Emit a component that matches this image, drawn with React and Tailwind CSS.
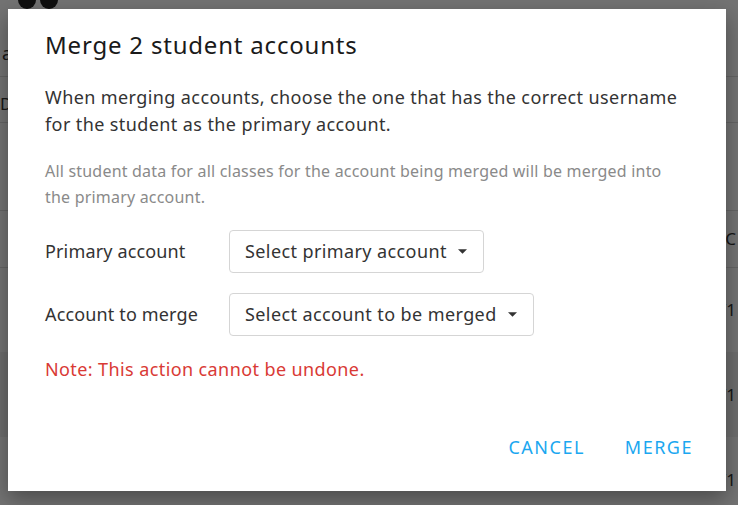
import React from 'react';

const font = { fontFamily: '"Noto Sans", "Open Sans", sans-serif' };

function SelectBox({ label }) {
  return (
    <button className="flex h-[43px] items-center gap-[11px] rounded-[4px] border border-[#d5d5d5] bg-white pl-[15px] pr-[16px] text-[18px] tracking-[0.4px] text-[#333]">
      <span>{label}</span>
      <svg width="9" height="5" viewBox="0 0 10 5">
        <path d="M0 0h10L5 5z" fill="#333" />
      </svg>
    </button>
  );
}

function BackgroundPage() {
  return (
    <div className="flex h-[505px] w-[738px] flex-col overflow-hidden bg-white text-[#333]">
      <div className="flex h-[40px] shrink-0 items-start gap-[4px] pl-[18px]">
        <div className="h-[9px] w-[18px] rounded-b-full bg-[#222]" />
        <div className="h-[9px] w-[18px] rounded-b-full bg-[#222]" />
      </div>
      <div className="flex h-[36px] shrink-0 items-start pl-[2px] text-[18px]">ac</div>
      <div className="flex h-[47px] shrink-0 items-center border-y border-[#ddd] pt-[8px] text-[17px]">DE</div>
      <div className="h-[87px] shrink-0" />
      <div className="flex h-[58px] shrink-0 items-center justify-end border-y border-[#ddd] pr-[2px] text-[17px]">C</div>
      <div className="flex h-[84px] shrink-0 items-center justify-end pr-[2px] text-[17px]">/1</div>
      <div className="flex h-[85px] shrink-0 items-center justify-end bg-[#f2f2f2] pr-[2px] text-[17px]">/1</div>
      <div className="flex h-[85px] shrink-0 items-center justify-end pr-[2px] text-[17px]">/1</div>
    </div>
  );
}

export default function App() {
  return (
    <div className="relative h-[505px] w-[738px] overflow-hidden" style={font}>
      <BackgroundPage />
      <div className="absolute inset-0 bg-black/[0.55]">
        <div className="ml-[8px] mt-[9px] flex h-[482px] w-[718px] flex-col bg-white pl-[37px] pr-[25px] pt-[20px] shadow-[0_8px_20px_rgba(0,0,0,0.35)]">
          <h1 className="text-[24px] leading-[32px] tracking-[0.8px] text-[#1a1a1a]">Merge 2 student accounts</h1>
          <p className="mt-[23px] text-[18px] leading-[27px] tracking-[0.4px] text-[#333]">
            When merging accounts, choose the one that has the correct username for the student as the primary account.
          </p>
          <p className="mt-[20px] pr-[24px] text-[16px] leading-[26px] tracking-[0.2px] text-[#8a8a8a]">
            All student data for all classes for the account being merged will be merged into the primary account.
          </p>
          <div className="mt-[20px] flex items-center">
            <span className="w-[184px] text-[18px] tracking-[0.15px] text-[#333]">Primary account</span>
            <SelectBox label="Select primary account" />
          </div>
          <div className="mt-[20px] flex items-center">
            <span className="w-[184px] text-[18px] tracking-[0.15px] text-[#333]">Account to merge</span>
            <SelectBox label="Select account to be merged" />
          </div>
          <p className="mt-[20px] text-[18px] leading-[27px] tracking-[0.4px] text-[#d93a35]">Note: This action cannot be undone.</p>
          <div className="mt-auto mb-[26px] flex justify-end gap-[24px]">
            <button className="px-[8px] py-[6px] text-[18px] leading-[24px] uppercase tracking-[1.5px] text-[#1ba7f0]">Cancel</button>
            <button className="px-[8px] py-[6px] text-[18px] leading-[24px] uppercase tracking-[1.5px] text-[#1ba7f0]">Merge</button>
          </div>
        </div>
      </div>
    </div>
  );
}
